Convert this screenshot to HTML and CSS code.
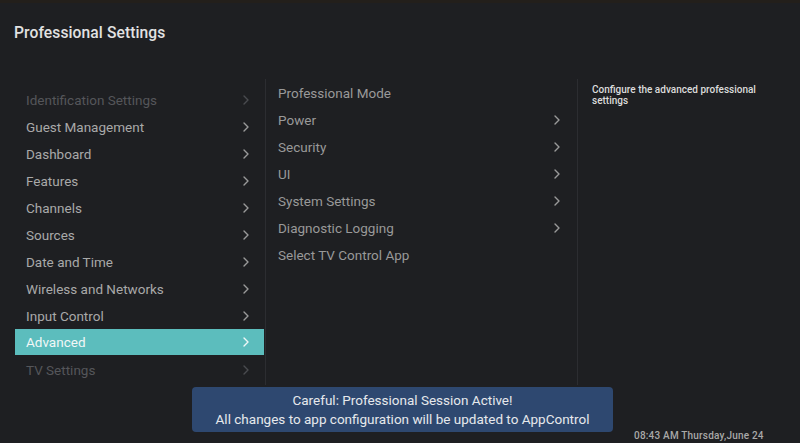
FILE: index.html
```html
<!DOCTYPE html>
<html lang="en">
<head>
<meta charset="utf-8">
<title>Professional Settings</title>
<link rel="stylesheet" href="styles.css">
</head>
<body>
<div class="screen">
  <header class="header">
    <h1 class="title">Professional Settings</h1>
  </header>
  <main class="columns">
    <nav class="col col-left">
      <ul class="menu">
        <li class="item dim"><span>Identification Settings</span><svg class="chev" viewBox="0 0 6 10"><path d="M1 1l4 4-4 4"/></svg></li>
        <li class="item"><span>Guest Management</span><svg class="chev" viewBox="0 0 6 10"><path d="M1 1l4 4-4 4"/></svg></li>
        <li class="item"><span>Dashboard</span><svg class="chev" viewBox="0 0 6 10"><path d="M1 1l4 4-4 4"/></svg></li>
        <li class="item"><span>Features</span><svg class="chev" viewBox="0 0 6 10"><path d="M1 1l4 4-4 4"/></svg></li>
        <li class="item"><span>Channels</span><svg class="chev" viewBox="0 0 6 10"><path d="M1 1l4 4-4 4"/></svg></li>
        <li class="item"><span>Sources</span><svg class="chev" viewBox="0 0 6 10"><path d="M1 1l4 4-4 4"/></svg></li>
        <li class="item"><span>Date and Time</span><svg class="chev" viewBox="0 0 6 10"><path d="M1 1l4 4-4 4"/></svg></li>
        <li class="item"><span>Wireless and Networks</span><svg class="chev" viewBox="0 0 6 10"><path d="M1 1l4 4-4 4"/></svg></li>
        <li class="item"><span>Input Control</span><svg class="chev" viewBox="0 0 6 10"><path d="M1 1l4 4-4 4"/></svg></li>
        <li class="item active"><span>Advanced</span><svg class="chev" viewBox="0 0 6 10"><path d="M1 1l4 4-4 4"/></svg></li>
        <li class="item dim"><span>TV Settings</span><svg class="chev" viewBox="0 0 6 10"><path d="M1 1l4 4-4 4"/></svg></li>
      </ul>
    </nav>
    <section class="col col-mid">
      <ul class="menu">
        <li class="item"><span>Professional Mode</span></li>
        <li class="item"><span>Power</span><svg class="chev" viewBox="0 0 6 10"><path d="M1 1l4 4-4 4"/></svg></li>
        <li class="item"><span>Security</span><svg class="chev" viewBox="0 0 6 10"><path d="M1 1l4 4-4 4"/></svg></li>
        <li class="item"><span>UI</span><svg class="chev" viewBox="0 0 6 10"><path d="M1 1l4 4-4 4"/></svg></li>
        <li class="item"><span>System Settings</span><svg class="chev" viewBox="0 0 6 10"><path d="M1 1l4 4-4 4"/></svg></li>
        <li class="item"><span>Diagnostic Logging</span><svg class="chev" viewBox="0 0 6 10"><path d="M1 1l4 4-4 4"/></svg></li>
        <li class="item"><span>Select TV Control App</span></li>
      </ul>
    </section>
    <aside class="col col-right">
      <p class="desc">Configure the advanced professional settings</p>
    </aside>
  </main>
  <div class="toast">
    <p>Careful: Professional Session Active!</p>
    <p>All changes to app configuration will be updated to AppControl</p>
  </div>
  <div class="clock">08:43 AM Thursday,June 24</div>
</div>
</body>
</html>
```

FILE: styles.css
```css
* { box-sizing: border-box; }
html, body {
  margin: 0;
  padding: 0;
  background: #1e1f22;
}
body {
  font-family: Roboto, "Liberation Sans", sans-serif;
  color: #b4b4b4;
}
.screen {
  position: relative;
  width: 800px;
  height: 443px;
  overflow: hidden;
  background: #1e1f22;
  border-top: 3px solid #231f1b;
  display: flex;
  flex-direction: column;
}
.header {
  height: 76px;
  padding: 21px 0 0 14px;
}
.title {
  margin: 0;
  font-size: 15.6px;
  font-weight: 500;
  color: #e2e2e2;
  letter-spacing: 0.1px;
}
.columns {
  display: flex;
  height: 306px;
}
.col { height: 100%; }
.col-left {
  width: 266px;
  border-right: 1px solid #2c2d31;
  padding: 7px 1px 0 15px;
}
.col-mid {
  width: 312px;
  border-right: 1px solid #2c2d31;
  padding: 0 17px 0 0;
}
.col-right {
  flex: 1;
  padding: 5px 0 0 14px;
}
.menu {
  list-style: none;
  margin: 0;
  padding: 0;
}
.item {
  height: 27px;
  display: flex;
  align-items: center;
  justify-content: space-between;
  font-size: 13.5px;
  color: #a9a9a9;
}
.col-left .item { padding: 0 15px 0 11px; }
.col-mid .item { padding: 0 0 0 12px; color: #999999; }
.item.dim { color: #55565a; }
.item.active {
  height: 26px;
  margin-bottom: 1px;
  background: #5cbdbd;
  color: #f2f7f7;
}
.chev {
  width: 6px;
  height: 10px;
  fill: none;
  stroke: #9a9a9a;
  stroke-width: 1.4;
  stroke-linecap: round;
  stroke-linejoin: round;
}
.item.dim .chev { stroke: #4a4b4f; }
.item.active .chev { stroke: #eef7f7; }
.desc {
  margin: 0;
  width: 180px;
  font-size: 10px;
  line-height: 11px;
  font-weight: 500;
  color: #dcdcdc;
}
.toast {
  position: absolute;
  left: 192px;
  top: 384px;
  width: 421px;
  height: 45px;
  background: #2e4870;
  border-radius: 4px;
  display: flex;
  flex-direction: column;
  align-items: center;
  justify-content: center;
  gap: 3px;
}
.toast p {
  margin: 0;
  font-size: 13.5px;
  line-height: 16px;
  color: #e6e8ec;
}
.clock {
  position: absolute;
  left: 634px;
  top: 427px;
  font-size: 10px;
  font-weight: 500;
  color: #a8a8a8;
  letter-spacing: 0.2px;
}
```
